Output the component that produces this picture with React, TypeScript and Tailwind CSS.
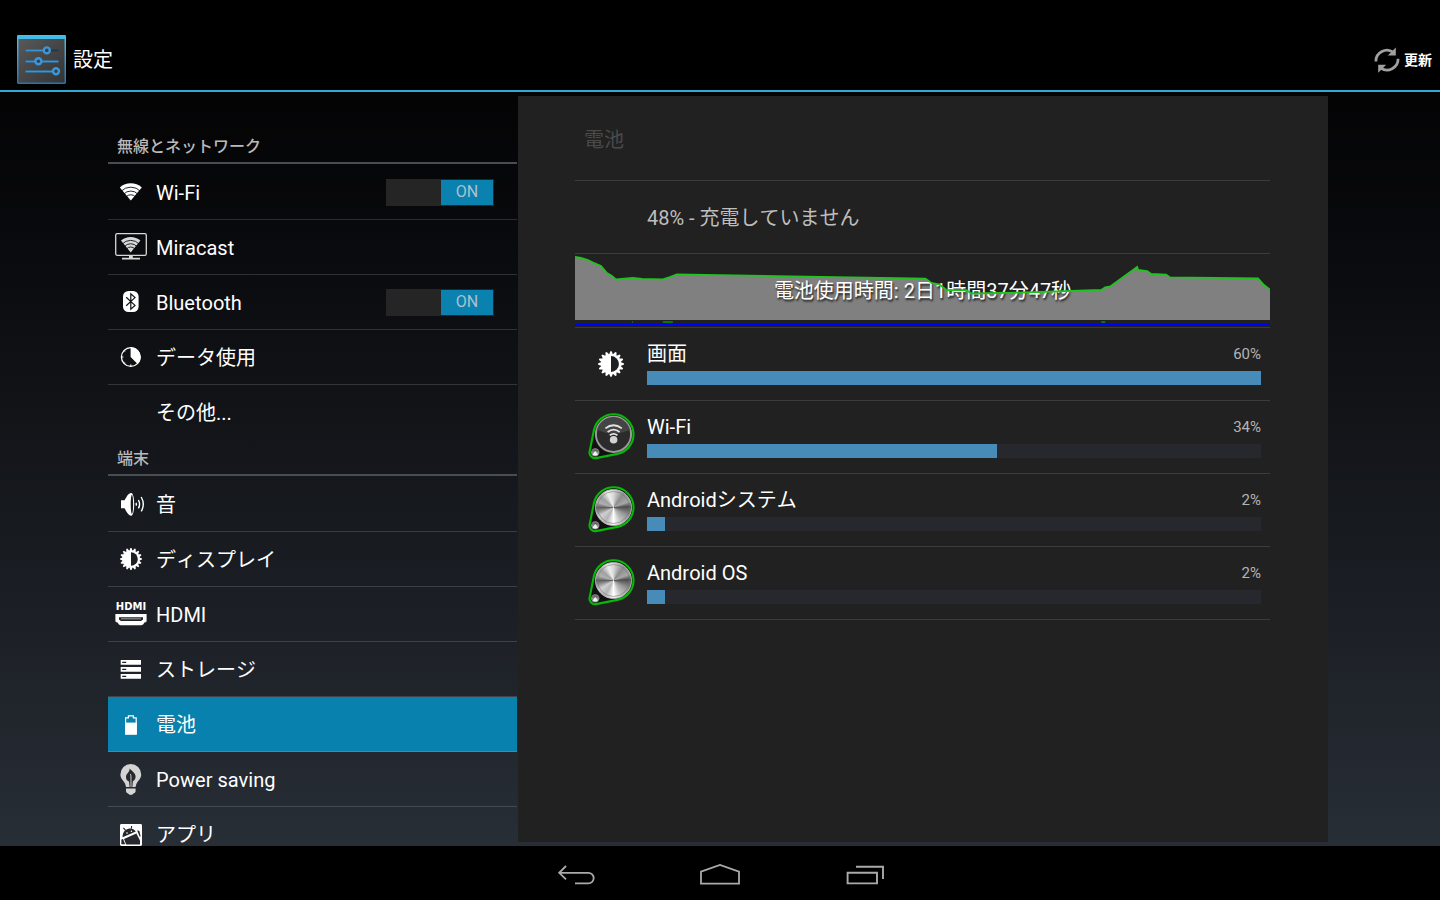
import { useState } from 'react'
import type { ReactNode } from 'react'

const WifiIcon = () => (
  <svg viewBox="0 0 32 32" className="w-8 h-8">
    <path d="M4.8 11.4A17 17 0 0 1 26.8 11.4L15.8 24.4Z" fill="#fff" />
    <g fill="none" stroke="#0a0b0d" strokeWidth="0.9">
      <path d="M6 15.4A13.4 13.4 0 0 1 25.6 15.4" />
      <path d="M8.6 18.2A9.8 9.8 0 0 1 23 18.2" />
      <path d="M11.2 20.8A6.2 6.2 0 0 1 20.4 20.8" />
    </g>
  </svg>
)

const MiracastIcon = () => (
  <svg viewBox="0 0 32 32" className="w-8 h-8">
    <rect x="0.7" y="2.7" width="30.6" height="21.6" rx="1.5" fill="none" stroke="#d8d8d8" strokeWidth="1.3" />
    <path d="M14 25H17.8V26.8H25V28.4H7V26.8H14Z" fill="#d8d8d8" />
    <path d="M6 9.6A14.6 14.6 0 0 1 25.4 9.6L15.7 21.4Z" fill="#d8d8d8" />
    <g fill="none" stroke="#0d0f11" strokeWidth="0.9">
      <path d="M7 13.2A11.8 11.8 0 0 1 24.4 13.2" />
      <path d="M9.3 15.6A8.6 8.6 0 0 1 22.1 15.6" />
      <path d="M11.6 17.9A5.4 5.4 0 0 1 19.8 17.9" />
    </g>
  </svg>
)

const BluetoothIcon = () => (
  <svg viewBox="0 0 32 32" className="w-8 h-8">
    <rect x="8" y="5" width="15.6" height="21" rx="5.5" fill="#fff" />
    <path d="M11.2 11.2L20 19.4L15.8 23.2V7.8L20 11.6L11.2 19.8" fill="none" stroke="#101214" strokeWidth="1.2" />
  </svg>
)

const DataIcon = () => (
  <svg viewBox="0 0 32 32" className="w-8 h-8">
    <circle cx="15.8" cy="16" r="9.4" fill="none" stroke="#fff" strokeWidth="1.3" />
    <path d="M15.6 6.2A9.8 9.8 0 0 1 22.6 23L15.6 16Z" fill="#fff" />
    <path d="M6.4 16H8.4M15.8 25.4V23.4M9.2 9.4L10.2 10.4M9.2 22.6L10.2 21.6" stroke="#fff" strokeWidth="1.2" />
  </svg>
)

const SoundIcon = () => (
  <svg viewBox="0 0 32 32" className="w-8 h-8">
    <path d="M6 12.2H9.6C11.4 9.4 13 5 16.4 5V27.6C13 27.6 11.4 23.2 9.6 20.2H6Z" fill="#fff" />
    <ellipse cx="16.4" cy="16.3" rx="2.8" ry="11.4" fill="#fff" />
    <ellipse cx="16.9" cy="16.3" rx="1.2" ry="9.6" fill="#17191b" />
    <g fill="none" stroke="#fff" strokeWidth="1.4">
      <path d="M21 14.8Q21.8 16.2 21 17.6" />
      <path d="M23.4 12Q25.8 16.2 23.4 20.4" />
      <path d="M26.2 9Q30.4 16.2 26.2 23.4" />
    </g>
  </svg>
)

const SPIKES = Array.from({ length: 16 }, (_, i) => i * 22.5)

const BrightnessIcon = ({ className }: { className: string }) => (
  <svg viewBox="4 4 24 24" className={className}>
    <g fill="#fff">
      <circle cx="16" cy="16" r="8.8" />
      {SPIKES.map(deg => (
        <path key={deg} d="M14.3 8L15.4 5H16.6L17.7 8Z" transform={`rotate(${deg} 16 16)`} />
      ))}
    </g>
    <path d="M16 9.2A6.8 6.8 0 0 1 16 22.8Z" fill="#1d2023" />
  </svg>
)

const HdmiIcon = () => (
  <svg viewBox="0 0 32 32" className="w-8 h-8 overflow-visible" aria-hidden="true">
    <text x="16" y="12" textAnchor="middle" fontSize="10" fontWeight="700" fontFamily="DejaVu Sans" fill="#fff">HDMI</text>
    <path d="M0.4 16H31.6V23.2Q31 24.4 29.4 24.6Q28.4 27.2 26.4 27.2H5.6Q3.6 27.2 2.6 24.6Q1 24.4 0.4 23.2Z" fill="#fff" />
    <path d="M4 19.2H28V21.4L26 23H6L4 21.4Z" fill="#1f2326" />
    <path d="M6 20.2H26V21.4H6Z" fill="#8a8d8f" />
  </svg>
)

const StorageIcon = () => (
  <svg viewBox="0 0 32 32" className="w-8 h-8">
    <path d="M5.7 7H26V11.8H5.7ZM5.7 14H26V18.8H5.7ZM5.7 21H26V25.8H5.7Z" fill="#fff" />
    <path d="M7.2 9.4H11.2M7.2 16.4H11.2M7.2 23.4H11.2" stroke="#1f2326" strokeWidth="1.2" />
  </svg>
)

const BatteryIcon = () => (
  <svg viewBox="0 0 32 32" className="w-8 h-8">
    <path d="M10.6 26V9.8H13.4V7.8H18.4V9.8H21.2V26Z" fill="none" stroke="#fff" strokeWidth="1.2" />
    <path d="M10 14.6H21.8V26.6H10Z" fill="#fff" />
  </svg>
)

const BulbIcon = () => (
  <svg viewBox="0 0 32 32" className="w-8 h-8">
    <path
      d="M15.8 1A10.4 10.4 0 0 1 26.2 11.4C26.2 15.6 23 17.6 21.6 20.4C21 21.8 20.8 23.6 20.4 24H11.2C10.8 23.6 10.6 21.8 10 20.4C8.6 17.6 5.4 15.6 5.4 11.4A10.4 10.4 0 0 1 15.8 1Z"
      fill="#d4d4d4"
    />
    <path d="M14.6 5.4C16.8 8 20.8 9.8 20.6 13.8C20.4 16.4 19.2 17.4 17.8 18.4L17.4 24H14.6L14 18.6C12 17.6 10.8 16 11 13.4C11.2 10.6 14.8 9 14.6 5.4Z" fill="#26292d" />
    <path d="M15.4 11C16.4 13.4 15.8 15.4 16 24" fill="none" stroke="#d4d4d4" strokeWidth="1" />
    <path d="M11 25.4H20.6V28.6Q20.2 30.2 18.6 30.6Q17.6 32 15.8 32Q14 32 13 30.6Q11.4 30.2 11 28.6Z" fill="#d4d4d4" />
  </svg>
)

const AppsIcon = () => (
  <svg viewBox="0 0 32 32" className="w-8 h-8">
    <rect x="5" y="6" width="22" height="22" rx="1.4" fill="#fff" />
    <g fill="#25292e">
      <path d="M7.6 19.2C7.4 13.6 11.2 10.6 14.6 10.4C17.6 10.2 20 11.8 20.8 13.6Z" />
      <path d="M9 21L21.4 15.4L25 22.6V26.4H11.2Z" />
      <path d="M6.4 21.6L8 21L10.2 26.2H6.4Z" />
      <path d="M22.2 12.6Q23.8 12 24.6 13.6L25.6 18.4H24.6Z" />
    </g>
    <path d="M10.6 12.4L8.4 9.8M16.4 10.6L16.6 8" stroke="#25292e" strokeWidth="1.1" />
    <circle cx="12" cy="15" r="0.8" fill="#fff" />
    <circle cx="16.4" cy="13.2" r="0.8" fill="#fff" />
  </svg>
)

const SettingsLogo = () => (
  <svg viewBox="0 0 49 49" className="w-[49px] h-[49px]">
    <defs>
      <linearGradient id="logo-bg" x1="0" y1="0" x2="1" y2="1">
        <stop offset="0" stopColor="#5a5a5a" />
        <stop offset="1" stopColor="#333" />
      </linearGradient>
      <linearGradient id="logo-edge" x1="0" y1="0" x2="0" y2="1">
        <stop offset="0" stopColor="#4cc4ee" />
        <stop offset="1" stopColor="#2672b8" />
      </linearGradient>
    </defs>
    <rect x="0.7" y="0.7" width="47.6" height="47.6" rx="1" fill="url(#logo-bg)" stroke="url(#logo-edge)" strokeWidth="1.5" />
    <path d="M0.4 0.6H48.6V4H0.4Z" fill="#41bce9" />
    <path d="M8.5 15.5H41.5M8.5 26.5H41.5M8.5 36.5H41.5" stroke="#20394c" strokeWidth="1.8" />
    <path d="M8.5 15.5H27M8.5 26.5H19M24 26.5H41.5M8.5 36.5H37" stroke="#3a93d4" strokeWidth="2" />
    <g fill="#33424e" stroke="#3d96da" strokeWidth="2.4">
      <circle cx="29.8" cy="15.4" r="3" />
      <circle cx="21.4" cy="26.2" r="3" />
      <circle cx="39" cy="36.2" r="3" />
    </g>
  </svg>
)

const RefreshIcon = () => (
  <svg viewBox="0 0 26 28" className="w-[26px] h-7">
    <g fill="none" stroke="#a0a0a0" strokeWidth="2.8">
      <path d="M1.9 15.4A11 11 0 0 1 19.4 6.4" />
      <path d="M24.1 12.8A11 11 0 0 1 6.6 21.8" />
    </g>
    <path d="M21.8 1.4V9.4H13.8Z" fill="#a0a0a0" />
    <path d="M4.2 26.8V18.8H12.2Z" fill="#a0a0a0" />
  </svg>
)

// metal knob inside a green teardrop outline
const KnobIcon = ({ wifi }: { wifi?: boolean }) => (
  <svg viewBox="0 0 48 48" className="w-12 h-12">
    <path
      d="M2.6 38.6L6.9 17.3A20 20 0 1 1 30.3 40.9L9 45.1A5.5 5.5 0 0 1 2.6 38.6Z"
      fill="#111"
      stroke="#08b808"
      strokeWidth="2.1"
      strokeLinejoin="round"
    />
    {wifi ? (
      <>
        <circle cx="26.5" cy="21.3" r="17.6" fill="#2b2b2b" stroke="#9a9a9a" strokeWidth="2" />
        <path d="M10 17A17 17 0 0 1 43 17Q26 24 10 17Z" fill="#444" />
        <g fill="none" stroke="#e4e4e4" strokeWidth="1.8">
          <path d="M18.4 15.4Q26.6 9 34.8 15.4" />
          <path d="M20.6 19Q26.6 14.4 32.6 19" />
          <path d="M22.8 22.2Q26.6 19.4 30.4 22.2" />
        </g>
        <circle cx="26.6" cy="26.8" r="3.8" fill="#d2d2d2" />
      </>
    ) : (
      <>
        <foreignObject x="8" y="3" width="37" height="37">
          <div className="w-full h-full rounded-full border border-[#b8b8b8] bg-[conic-gradient(#d8d8d8,#8c8c8c_10%,#a8a8a8_19%,#4c4c4c_24%,#999_34%,#c0c0c0_42%,#fff_50%,#b4b4b4_58%,#d0d0d0_66%,#606060_75%,#b0b0b0_80%,#a0a0a0_86%,#eee_94%,#d8d8d8)]" />
        </foreignObject>
        <circle cx="26.5" cy="21.5" r="16" fill="none" stroke="#777" strokeWidth="0.6" />
      </>
    )}
    <circle cx="8.2" cy="39.4" r="4.2" fill="#8c8c8c" />
    <path d="M4.6 38.4A4 4 0 0 1 11.8 38.4Z" fill="#666" />
    <path d="M5.6 41.6A3.6 3.6 0 0 0 11 41.2L8.2 38Z" fill="#f2f2f2" />
  </svg>
)

type Item = { id: string; label: string; icon?: ReactNode; toggle?: boolean }

const SECTIONS: { title: string; items: Item[] }[] = [
  {
    title: '無線とネットワーク',
    items: [
      { id: 'wifi', label: 'Wi-Fi', icon: <WifiIcon />, toggle: true },
      { id: 'miracast', label: 'Miracast', icon: <MiracastIcon /> },
      { id: 'bluetooth', label: 'Bluetooth', icon: <BluetoothIcon />, toggle: true },
      { id: 'data', label: 'データ使用', icon: <DataIcon /> },
      { id: 'more', label: 'その他...' },
    ],
  },
  {
    title: '端末',
    items: [
      { id: 'sound', label: '音', icon: <SoundIcon /> },
      { id: 'display', label: 'ディスプレイ', icon: <BrightnessIcon className="w-6 h-6" /> },
      { id: 'hdmi', label: 'HDMI', icon: <HdmiIcon /> },
      { id: 'storage', label: 'ストレージ', icon: <StorageIcon /> },
      { id: 'battery', label: '電池', icon: <BatteryIcon /> },
      { id: 'power', label: 'Power saving', icon: <BulbIcon /> },
      { id: 'apps', label: 'アプリ', icon: <AppsIcon /> },
    ],
  },
]

const USAGE = [
  { name: '画面', percent: 60, bar: 100, icon: <BrightnessIcon className="w-7 h-7" /> },
  { name: 'Wi-Fi', percent: 34, bar: 57, icon: <KnobIcon wifi /> },
  { name: 'Androidシステム', percent: 2, bar: 3, icon: <KnobIcon /> },
  { name: 'Android OS', percent: 2, bar: 3, icon: <KnobIcon /> },
]

const LEVELS =
  '0,3 6,4 13,6 18,8.5 26,12 32,19 37,22 41,25.5 58,24 67,25 88,25.4 95,23 102,20.4 351,24.6 357,29 365,30.5 372,36 392,36.2 397,39.5 445,38.6 527,36 531,33.4 536,32.4 563,13 564,16 573,17 577,20 592,20.7 596,23.4 684,24.4 690,31 696,35.5'

const Toggle = ({ label }: { label: string }) => {
  const [on, setOn] = useState(true)
  return (
    <label className={`flex w-[108px] h-[27px] mr-[23px] p-px bg-[#252525] cursor-pointer ${on ? 'justify-end' : 'justify-start'}`}>
      <input
        type="checkbox"
        aria-label={label}
        checked={on}
        onChange={(e) => setOn(e.target.checked)}
        className="sr-only"
      />
      <span
        className={`flex items-center justify-center w-[52px] text-base leading-6 ${
          on ? 'bg-[#0a81ae] text-[#a9c3ce]' : 'bg-[#444] text-[#999]'
        }`}
      >
        {on ? 'ON' : 'OFF'}
      </span>
    </label>
  )
}

const BatteryChart = () => (
  <div className="grid h-[74px] border-b border-[#3c3c3c]">
    <svg viewBox="0 0 696 73" preserveAspectRatio="none" className="[grid-area:1/1] w-full h-[73px]">
      <polygon points={`0,66 ${LEVELS} 696,66`} fill="#808080" />
      <path d="M57 67H58V69H57ZM88 67H98V69H88ZM527 67H531V69H527Z" fill="#008000" />
      <path d="M0 69.5H696V72H0Z" fill="#00f" />
    </svg>
    <p className="[grid-area:1/1] place-self-center text-xl leading-6 text-white [text-shadow:1px_2px_2px_#222]">
      電池使用時間: 2日1時間37分47秒
    </p>
    <svg viewBox="0 0 696 73" preserveAspectRatio="none" className="[grid-area:1/1] w-full h-[73px] pointer-events-none">
      <polyline points={LEVELS} fill="none" stroke="#1fc41f" strokeWidth="1.8" />
    </svg>
  </div>
)

export default function App() {
  const [selected, setSelected] = useState('battery')

  return (
    <div className='flex flex-col h-screen overflow-hidden bg-black text-white font-["Roboto","Noto_Sans_CJK_JP",sans-serif] [font-kerning:none]'>
      <header className="flex items-center justify-between h-[92px] shrink-0 pt-7 pl-[17px] pr-2 border-b-2 border-[#2fa9d6]">
        <div className="flex items-center gap-[7px]">
          <SettingsLogo />
          <h1 className="pt-0.5 text-xl leading-6">設定</h1>
        </div>
        <button type="button" className="flex items-center gap-1 pt-0.5 text-sm font-bold cursor-pointer">
          <RefreshIcon />
          更新
        </button>
      </header>

      <main className="grid grid-cols-[410fr_810fr] flex-1 min-h-0 pl-[108px] pr-28 bg-linear-to-b from-[#040405] to-[#282e36]">
        <nav className="min-h-0 pt-9 pr-px overflow-y-auto [scrollbar-width:none]">
          {SECTIONS.map(section => (
            <section key={section.title}>
              <h2 className="flex items-center h-9 pt-1 px-[9px] border-b-2 border-[#4a4d50] text-base leading-6 font-medium text-[#b9b9b9]">
                {section.title}
              </h2>
              <ul className="pt-px">
                {section.items.map(item => (
                  <li
                    key={item.id}
                    className={`flex items-center h-[55px] border-b border-white/15 last:border-transparent ${
                      selected === item.id ? 'bg-[#0981ae]' : ''
                    }`}
                  >
                    <a
                      href={`#${item.id}`}
                      onClick={() => setSelected(item.id)}
                      className="flex flex-1 items-center gap-[9px] h-full pl-[7px] text-xl leading-6"
                    >
                      <span className="flex items-center justify-center w-8 h-8">{item.icon}</span>
                      <span className="pt-0.5">{item.label}</span>
                    </a>
                    {item.toggle && <Toggle label={item.label} />}
                  </li>
                ))}
              </ul>
            </section>
          ))}
        </nav>

        <section className="mt-1 mb-1 pl-[57px] pr-[58px] bg-[#212121]">
          <h2 className="flex items-center h-[85px] pt-1 px-[9px] border-b border-[#3c3c3c] text-xl leading-6 text-[#4a4a4a]">電池</h2>
          <p className="flex items-center h-[73px] pt-0.5 pl-[72px] border-b border-[#3c3c3c] text-xl leading-6 text-[#bebebe]">
            48% - 充電していません
          </p>
          <BatteryChart />
          <ul>
            {USAGE.map(row => (
              <li key={row.name} className="flex items-center gap-3 h-[73px] pl-3 pr-[9px] border-b border-[#3c3c3c]">
                <span className="flex items-center justify-center w-12 h-12">{row.icon}</span>
                <div className="flex-1 self-start pt-3.5">
                  <div className="flex items-center justify-between leading-6">
                    <span className="text-xl leading-6">{row.name}</span>
                    <span className="text-[15px] leading-6 text-[#b4b4b4]">{row.percent}%</span>
                  </div>
                  <div className="h-3.5 mt-[5px] bg-[#27272e]">
                    <div className="h-full bg-[#478bb9]" style={{ width: `${row.bar}%` }} />
                  </div>
                </div>
              </li>
            ))}
          </ul>
        </section>
      </main>

      <footer className="flex items-center justify-center gap-[104px] h-[54px] shrink-0 pt-1">
        <button type="button" aria-label="戻る" className="cursor-pointer">
          <svg viewBox="0 0 40 24" className="w-10 h-6" fill="none" stroke="#aaa" strokeWidth="1.8">
            <path d="M10 3L3.2 9.8L10 16.4M3.2 9.8H32.4A5.2 5.2 0 0 1 32.4 20.4H19" />
          </svg>
        </button>
        <button type="button" aria-label="ホーム" className="cursor-pointer">
          <svg viewBox="0 0 40 24" className="w-10 h-6" fill="none" stroke="#aaa" strokeWidth="1.8">
            <path d="M1 8.6L20 2L39 8.6V20.6H1Z" />
          </svg>
        </button>
        <button type="button" aria-label="最近使ったアプリ" className="cursor-pointer">
          <svg viewBox="0 0 40 24" className="w-10 h-6" fill="none" stroke="#aaa" strokeWidth="1.9">
            <path d="M3.6 9.8H33V20.4H3.6ZM12 3.8H39V16" />
          </svg>
        </button>
      </footer>
    </div>
  )
}
